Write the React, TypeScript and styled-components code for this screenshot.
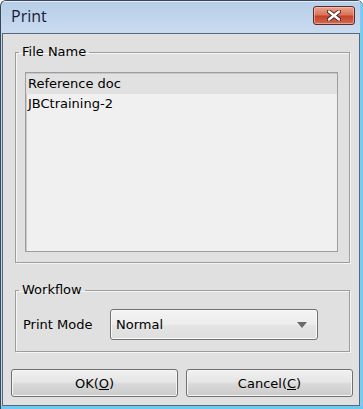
import React, { FC } from 'react'
import styled, { createGlobalStyle } from 'styled-components'

const GlobalStyle = createGlobalStyle`
  html, body {
    margin: 0;
    padding: 0;
    background: #ffffff;
  }
  body {
    font-family: 'DejaVu Sans', Verdana, sans-serif;
    font-size: 13px;
    color: #000;
  }
`

const Window = styled.div`
  width: 363px;
  height: 409px;
  box-sizing: border-box;
  display: flex;
  flex-direction: column;
  border-left: 1px solid #3a4656;
  border-top: 1px solid #3a4656;
  border-top-left-radius: 6px;
  border-top-right-radius: 6px;
  padding: 0 3px 3px 1px;
  background: linear-gradient(90deg, #c4d8ed 0%, #c4d8ed 97%, #6cc9f0 100%);
  box-shadow: inset 0 -3px 0 #6cc9f0;
  overflow: hidden;
`

const TitleBar = styled.div`
  height: 32px;
  flex: none;
  display: flex;
  align-items: center;
  justify-content: space-between;
  padding: 0 5px 0 9px;
  background: linear-gradient(#b6cee8, #c9dbef);
  box-shadow: inset 0 1px 0 rgba(255, 255, 255, 0.6);
`

const Title = styled.span`
  font-family: 'Open Sans', 'DejaVu Sans', sans-serif;
  font-size: 16px;
  color: #1a1a38;
  margin-top: -2px;
`

const CloseButton = styled.div`
  width: 42px;
  height: 19px;
  box-sizing: border-box;
  margin-top: -3px;
  border: 1px solid #5a2a2a;
  border-radius: 3px;
  background: linear-gradient(#eaa48f 0%, #d9755a 45%, #c4432a 55%, #d46a50 100%);
  box-shadow: inset 0 0 0 1px rgba(255, 220, 210, 0.5);
  display: flex;
  align-items: center;
  justify-content: center;
`

const Client = styled.div`
  flex: 1;
  display: flex;
  flex-direction: column;
  border: 1px solid #56687c;
  background: #e0e0e0;
  padding: 0 6px 0 8px;
`

const GroupBox = styled.fieldset<{ $top: number }>`
  margin: ${({ $top }) => $top}px 3px 0 4px;
  padding: 0;
  border: 1px solid #9d9d9d;
  box-shadow: 1px 1px 0 #f6f6f6, inset 1px 1px 0 #f6f6f6;
  min-width: 0;
`

const Legend = styled.legend`
  padding: 0 3px;
  margin-left: 3px;
  line-height: 16px;
  height: 16px;
`

const ListArea = styled.div`
  margin: 12px 11px 10px 9px;
  height: 180px;
  box-sizing: border-box;
  border: 1px solid #9a9da3;
  box-shadow: inset 1px 1px 0 #c8c8c8;
  background: #f0f0f0;
  padding-top: 1px;
`

const ListRow = styled.div<{ $selected?: boolean }>`
  height: 20px;
  line-height: 20px;
  padding-left: 2px;
  background: ${({ $selected }) => ($selected ? '#e1e1e1' : 'transparent')};
`

const FieldRow = styled.div`
  display: flex;
  align-items: center;
  padding: 11px 0 11px 7px;
`

const FieldLabel = styled.span`
  width: 87px;
  flex: none;
`

const Combo = styled.div`
  width: 208px;
  height: 31px;
  box-sizing: border-box;
  border: 1px solid #707070;
  border-radius: 3px;
  background: linear-gradient(#f4f4f4, #ececec 50%, #e4e4e4 51%, #dedede);
  box-shadow: inset 0 0 0 1px #fbfbfb;
  display: flex;
  align-items: center;
  justify-content: space-between;
  padding: 0 10px 0 5px;
`

const ButtonRow = styled.div`
  display: flex;
  gap: 8px;
  margin-top: 17px;
`

const Button = styled.button`
  flex: 1;
  height: 28px;
  border: 1px solid #707070;
  border-radius: 3px;
  background: linear-gradient(#f0f0f0 0%, #e6e6e6 45%, #d8d8d8 55%, #cbcbcb 100%);
  box-shadow: inset 0 0 0 1px #f6f6f6;
  font-family: 'DejaVu Sans', Verdana, sans-serif;
  font-size: 13px;
  color: #000;
  padding: 0;
`

const Mnemonic = styled.span`
  text-decoration: underline;
`

const CloseIcon: FC = () => (
  <svg width="14" height="11" viewBox="0 0 14 11">
    <path d="M2 1.5 L12 9.5 M12 1.5 L2 9.5" stroke="#4a1e1e" strokeWidth="4.2" strokeLinecap="round" />
    <path d="M2 1.5 L12 9.5 M12 1.5 L2 9.5" stroke="#ffffff" strokeWidth="2.4" strokeLinecap="round" />
  </svg>
)

const ArrowDown: FC = () => (
  <svg width="10" height="6" viewBox="0 0 10 6">
    <path d="M0 0 H10 L5 6 Z" fill="#6a6a6a" />
  </svg>
)

const files = ['Reference doc', 'JBCtraining-2']

export default function App() {
  return (
    <>
      <GlobalStyle />
      <Window>
        <TitleBar>
          <Title>Print</Title>
          <CloseButton>
            <CloseIcon />
          </CloseButton>
        </TitleBar>
        <Client>
          <GroupBox $top={10}>
            <Legend>File Name</Legend>
            <ListArea>
              {files.map((name, i) => (
                <ListRow key={name} $selected={i === 0}>
                  {name}
                </ListRow>
              ))}
            </ListArea>
          </GroupBox>
          <GroupBox $top={19}>
            <Legend>Workflow</Legend>
            <FieldRow>
              <FieldLabel>Print Mode</FieldLabel>
              <Combo>
                <span>Normal</span>
                <ArrowDown />
              </Combo>
            </FieldRow>
          </GroupBox>
          <ButtonRow>
            <Button>
              OK(<Mnemonic>O</Mnemonic>)
            </Button>
            <Button>
              Cancel(<Mnemonic>C</Mnemonic>)
            </Button>
          </ButtonRow>
        </Client>
      </Window>
    </>
  )
}
